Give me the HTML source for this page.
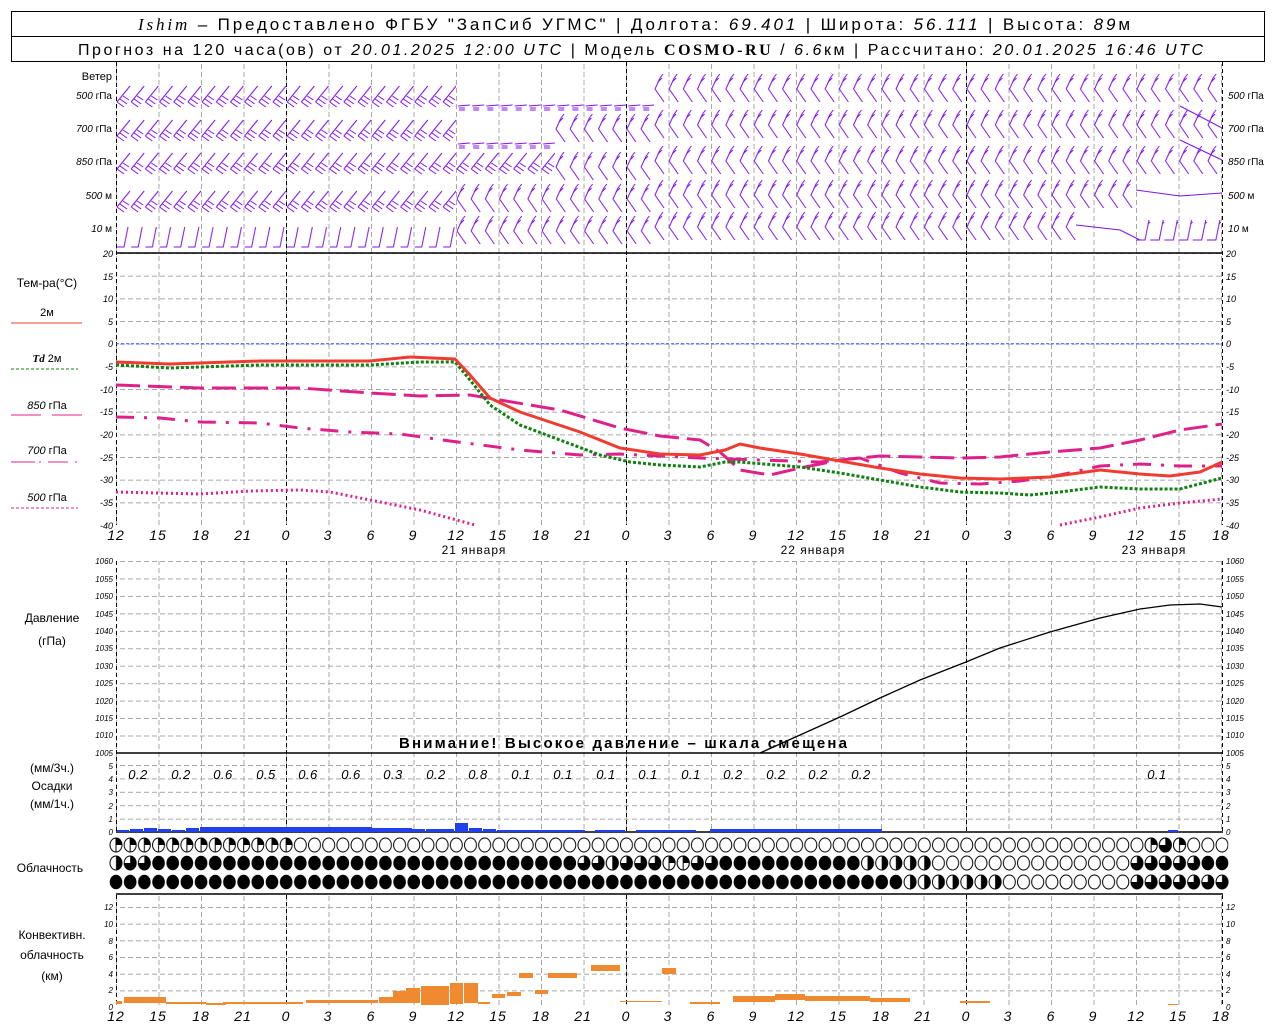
<!DOCTYPE html>
<html><head><meta charset="utf-8"><style>
html,body{margin:0;padding:0;background:#fff;}
svg{display:block;font-family:"Liberation Sans",sans-serif;}
.it{font-style:italic;}
</style></head><body>
<svg width="1280" height="1024" viewBox="0 0 1280 1024" xmlns="http://www.w3.org/2000/svg">
<defs>
<pattern id="vg" x="116" y="0" width="42.5" height="8" patternUnits="userSpaceOnUse"><rect x="0" y="0" width="1" height="5" fill="#a8a8a8"/></pattern>
<pattern id="hgT" x="0" y="253" width="8" height="22.667" patternUnits="userSpaceOnUse"><rect x="0" y="0" width="5" height="1" fill="#a8a8a8"/></pattern>
<pattern id="hgP" x="0" y="561" width="8" height="17.45" patternUnits="userSpaceOnUse"><rect x="0" y="0" width="5" height="1" fill="#a8a8a8"/></pattern>
<pattern id="hgR" x="0" y="765" width="8" height="13.4" patternUnits="userSpaceOnUse"><rect x="0" y="0" width="5" height="1" fill="#a8a8a8"/></pattern>
<pattern id="hgC" x="0" y="907" width="8" height="16.67" patternUnits="userSpaceOnUse"><rect x="0" y="0" width="5" height="1" fill="#a8a8a8"/></pattern>
<pattern id="cE" x="0" y="0" width="14.18" height="20" patternUnits="userSpaceOnUse"><ellipse cx="7" cy="10" rx="6" ry="7" fill="#fff" stroke="#000" stroke-width="1"/></pattern>
<pattern id="cF" x="0" y="0" width="14.18" height="20" patternUnits="userSpaceOnUse"><ellipse cx="7" cy="10" rx="6.3" ry="7.3" fill="#000"/></pattern>
<pattern id="cH" x="0" y="0" width="14.18" height="20" patternUnits="userSpaceOnUse"><ellipse cx="7" cy="10" rx="6" ry="7" fill="#fff" stroke="#000"/><path d="M7 3 A6 7 0 0 1 7 17 Z" fill="#000"/></pattern>
<pattern id="cQ" x="0" y="0" width="14.18" height="20" patternUnits="userSpaceOnUse"><ellipse cx="7" cy="10" rx="6" ry="7" fill="#fff" stroke="#000"/><path d="M7 3 A6 7 0 0 1 13 10 L7 10 Z" fill="#000"/><line x1="7" y1="3" x2="7" y2="17" stroke="#000"/></pattern>
<pattern id="c3" x="0" y="0" width="14.18" height="20" patternUnits="userSpaceOnUse"><ellipse cx="7" cy="10" rx="6" ry="7" fill="#fff" stroke="#000"/><path d="M7 3 A6 7 0 1 1 1 10 L7 10 Z" fill="#000"/></pattern>
<pattern id="wA" x="0" y="0" width="14.18" height="40" patternUnits="userSpaceOnUse"><g stroke="#8010f0" fill="none" stroke-width="1"><path d="M1 24 L14 8"/><path d="M1 24 L8 29 M4 21 L11 26 M7 18 L13 22"/></g></pattern>
<pattern id="wB" x="0" y="0" width="14.18" height="40" patternUnits="userSpaceOnUse"><g stroke="#8010f0" fill="none" stroke-width="1"><path d="M6 6 L1 17 L10 30"/><path d="M6 6 L9 2 M4 10 L8 6"/></g></pattern>
<pattern id="wC" x="0" y="0" width="14.18" height="40" patternUnits="userSpaceOnUse"><g stroke="#8010f0" fill="none" stroke-width="1"><path d="M12 10 L8 30 L1 30"/></g></pattern>
<pattern id="wD" x="0" y="0" width="14.18" height="40" patternUnits="userSpaceOnUse"><g stroke="#8010f0" fill="none" stroke-width="1"><path d="M13 10 L9 30 L0 30"/><path d="M12 14 L14 12"/></g></pattern>
<pattern id="wE" x="0" y="0" width="14.18" height="40" patternUnits="userSpaceOnUse"><g stroke="#8010f0" fill="none" stroke-width="1"><path d="M2 24 L14 23"/><path d="M3 26 L9 26 M3 28 L9 28"/></g></pattern>
</defs>

<!-- header -->
<rect x="11.5" y="11.5" width="1253" height="50" fill="#fff" stroke="#000"/>
<line x1="11" y1="36.5" x2="1265" y2="36.5" stroke="#000"/>
<text x="138" y="30" font-size="17" textLength="992" lengthAdjust="spacing"><tspan font-family="Liberation Serif" font-style="italic">Ishim</tspan> – Предоставлено ФГБУ "ЗапСиб УГМС" | Долгота: <tspan class="it">69.401</tspan> | Широта: <tspan class="it">56.111</tspan> | Высота: <tspan class="it">89</tspan>м</text>
<text x="78" y="55" font-size="16" textLength="1125" lengthAdjust="spacing">Прогноз на 120 часа(ов) от <tspan class="it">20.01.2025 12:00 UTC</tspan>  | Модель <tspan font-family="Liberation Serif" font-weight="bold">COSMO-RU</tspan> / <tspan class="it">6.6</tspan>км | Рассчитано: <tspan class="it">20.01.2025 16:46 UTC</tspan></text>

<!-- grids -->
<rect x="116" y="62" width="1107" height="191" fill="url(#vg)"/>
<rect x="116" y="253" width="1107" height="272" fill="url(#vg)"/>
<rect x="116" y="561" width="1107" height="271" fill="url(#vg)"/>
<rect x="116" y="895" width="1107" height="112" fill="url(#vg)"/>
<rect x="116" y="253" width="1107" height="272" fill="url(#hgT)"/>
<rect x="116" y="561" width="1107" height="192" fill="url(#hgP)"/>
<rect x="116" y="765" width="1107" height="67" fill="url(#hgR)"/>
<rect x="116" y="907" width="1107" height="100" fill="url(#hgC)"/>
<g stroke="#000" stroke-dasharray="4 3" stroke-width="1">
<path d="M116.5 62V525M286.5 62V525M626.5 62V525M966.5 62V525M1222.5 62V525"/>
<path d="M116.5 561V832M286.5 561V832M626.5 561V832M966.5 561V832M1222.5 561V832"/>
<path d="M116.5 895V1007M286.5 895V1007M626.5 895V1007M966.5 895V1007M1222.5 895V1007"/>
</g>
<g stroke="#000" stroke-width="1.5">
<line x1="116" y1="253" x2="1223" y2="253"/>
<line x1="116" y1="753" x2="1223" y2="753"/>
<line x1="116" y1="832" x2="1223" y2="832"/>
<line x1="116" y1="894" x2="1223" y2="894"/>
</g>
<line x1="116" y1="343.7" x2="1222" y2="343.7" stroke="#3050ff" stroke-dasharray="3 2"/>

<!-- wind barbs -->
<g transform="translate(116,78)"><rect width="340" height="40" fill="url(#wA)"/></g>
<g transform="translate(116,112)"><rect width="340" height="40" fill="url(#wA)"/></g>
<g transform="translate(116,145)"><rect width="340" height="40" fill="url(#wA)"/></g>
<g transform="translate(116,183)"><rect width="340" height="40" fill="url(#wA)"/></g>
<g transform="translate(116,217)"><rect width="340" height="36" fill="url(#wC)"/></g>
<g transform="translate(456,82)"><rect width="198" height="40" fill="url(#wE)"/></g>
<g transform="translate(456,120)"><rect width="99" height="40" fill="url(#wE)"/></g>
<g transform="translate(555,112)"><rect width="100" height="36" fill="url(#wB)"/></g>
<g transform="translate(456,145)"><rect width="99" height="40" fill="url(#wA)"/></g>
<g transform="translate(555,150)"><rect width="100" height="36" fill="url(#wB)"/></g>
<g transform="translate(456,182)"><rect width="198" height="36" fill="url(#wB)"/></g>
<g transform="translate(456,214)"><rect width="198" height="36" fill="url(#wB)"/></g>
<g transform="translate(654,72)"><rect width="567" height="36" fill="url(#wB)"/></g>
<g transform="translate(654,108)"><rect width="567" height="36" fill="url(#wB)"/></g>
<g transform="translate(654,144)"><rect width="567" height="36" fill="url(#wB)"/></g>
<g transform="translate(654,178)"><rect width="482" height="36" fill="url(#wB)"/></g>
<g transform="translate(654,210)"><rect width="425" height="36" fill="url(#wB)"/></g>
<g transform="translate(1136,210)"><rect width="86" height="40" fill="url(#wD)"/></g>
<g stroke="#8010f0" fill="none">
<path d="M1136 190 L1180 196 L1222 193"/>
<path d="M1076 225 L1120 230 L1140 240"/>
<path d="M1180 106 L1222 128 M1180 140 L1222 160"/>
</g>
<g font-size="10" font-style="italic">
<text x="112" y="80" text-anchor="end" font-style="normal" font-size="11">Ветер</text>
<text x="112" y="99" text-anchor="end">500 <tspan font-style="normal">гПа</tspan></text>
<text x="112" y="132" text-anchor="end">700 <tspan font-style="normal">гПа</tspan></text>
<text x="112" y="165" text-anchor="end">850 <tspan font-style="normal">гПа</tspan></text>
<text x="112" y="199" text-anchor="end">500 <tspan font-style="normal">м</tspan></text>
<text x="112" y="232" text-anchor="end">10 <tspan font-style="normal">  м</tspan></text>
<text x="1228" y="99">500 <tspan font-style="normal">гПа</tspan></text>
<text x="1228" y="132">700 <tspan font-style="normal">гПа</tspan></text>
<text x="1228" y="165">850 <tspan font-style="normal">гПа</tspan></text>
<text x="1228" y="199">500 <tspan font-style="normal">м</tspan></text>
<text x="1228" y="232">10 <tspan font-style="normal">  м</tspan></text>
</g>

<!-- temperature -->
<g font-size="9" font-style="italic">
<g text-anchor="end">
<text x="113" y="257">20</text><text x="113" y="280">15</text><text x="113" y="302">10</text><text x="113" y="325">5</text><text x="113" y="347">0</text><text x="113" y="370">-5</text><text x="113" y="393">-10</text><text x="113" y="415">-15</text><text x="113" y="438">-20</text><text x="113" y="461">-25</text><text x="113" y="483">-30</text><text x="113" y="506">-35</text><text x="113" y="529">-40</text>
</g>
<text x="1226" y="257">20</text><text x="1226" y="280">15</text><text x="1226" y="302">10</text><text x="1226" y="325">5</text><text x="1226" y="347">0</text><text x="1226" y="370">-5</text><text x="1226" y="393">-10</text><text x="1226" y="415">-15</text><text x="1226" y="438">-20</text><text x="1226" y="461">-25</text><text x="1226" y="483">-30</text><text x="1226" y="506">-35</text><text x="1226" y="529">-40</text>
</g>
<g font-size="11">
<text x="47" y="287" text-anchor="middle" font-size="12">Тем-ра(°C)</text>
<text x="47" y="316" text-anchor="middle">2м</text>
<line x1="11" y1="323" x2="82" y2="323" stroke="#f03c30"/>
<text x="47" y="362" text-anchor="middle"><tspan font-family="Liberation Serif" font-style="italic" font-weight="bold">Td</tspan>  2м</text>
<line x1="11" y1="369" x2="78" y2="369" stroke="#108010" stroke-dasharray="3 2"/>
<text x="47" y="409" text-anchor="middle"><tspan font-style="italic">850</tspan> гПа</text>
<line x1="11" y1="415" x2="41" y2="415" stroke="#e0208a"/><line x1="52" y1="415" x2="82" y2="415" stroke="#e0208a"/>
<text x="47" y="454" text-anchor="middle"><tspan font-style="italic">700</tspan> гПа</text>
<path d="M11 462H35M39 462H41M48 462H68M75 462H77" stroke="#e0208a"/>
<text x="47" y="501" text-anchor="middle"><tspan font-style="italic">500</tspan> гПа</text>
<line x1="11" y1="508" x2="78" y2="508" stroke="#e0208a" stroke-dasharray="3 2"/>
</g>
<g fill="none" stroke-width="3">
<polyline stroke="#e0208a" stroke-dasharray="2 3" points="116,492 200,494 250,491 300,490 330,492 370,500 420,510 475,525"/>
<polyline stroke="#e0208a" stroke-dasharray="2 3" points="1060,525 1100,517 1140,508 1180,503 1222,499"/>
<polyline stroke="#e0208a" stroke-dasharray="18 10 3 10" points="116,417 160,418 200,422 260,423 300,428 350,432 400,434 450,441 520,450 580,455 620,454 700,458 760,460 820,462 860,458 900,473 940,483 980,484 1020,481 1060,475 1100,466 1140,464 1180,466 1222,466"/>
<polyline stroke="#e0208a" stroke-dasharray="24 8" points="116,385 200,388 300,388 370,393 420,396 470,395 500,400 560,410 620,428 660,436 700,440 720,452 740,470 770,475 800,468 840,460 880,456 920,457 960,458 1000,457 1050,452 1100,448 1140,440 1180,430 1222,424"/>
<polyline stroke="#108010" stroke-dasharray="3 2" points="116,365 170,368 260,365 370,365 420,362 455,362 470,380 490,405 520,425 560,440 600,455 630,462 660,465 700,467 725,462 740,462 800,467 840,473 880,480 920,487 960,492 1000,493 1030,495 1060,492 1100,487 1140,489 1180,489 1222,478"/>
<polyline stroke="#f03c30" points="116,362 170,364 260,361 370,361 410,357 455,359 470,375 490,398 520,412 580,432 620,448 660,454 700,455 725,450 740,444 760,448 800,454 840,461 880,468 920,474 960,478 1000,479 1050,477 1100,470 1140,474 1170,476 1200,472 1222,462"/>
</g>

<!-- x axis labels -->
<g font-size="14" font-style="italic" text-anchor="middle" letter-spacing="1">
<text x="116" y="540">12</text><text x="158" y="540">15</text><text x="201" y="540">18</text><text x="243" y="540">21</text><text x="286" y="540">0</text><text x="328" y="540">3</text><text x="371" y="540">6</text><text x="413" y="540">9</text><text x="456" y="540">12</text><text x="498" y="540">15</text><text x="541" y="540">18</text><text x="583" y="540">21</text><text x="626" y="540">0</text><text x="668" y="540">3</text><text x="711" y="540">6</text><text x="753" y="540">9</text><text x="796" y="540">12</text><text x="838" y="540">15</text><text x="881" y="540">18</text><text x="923" y="540">21</text><text x="966" y="540">0</text><text x="1008" y="540">3</text><text x="1051" y="540">6</text><text x="1093" y="540">9</text><text x="1136" y="540">12</text><text x="1178" y="540">15</text><text x="1221" y="540">18</text>
</g>
<g font-size="12" text-anchor="middle" letter-spacing="1">
<text x="474" y="554">21 января</text><text x="813" y="554">22 января</text><text x="1154" y="554">23 января</text>
</g>

<!-- pressure -->
<g font-size="8" font-style="italic">
<g text-anchor="end">
<text x="113" y="564">1060</text><text x="113" y="582">1055</text><text x="113" y="599">1050</text><text x="113" y="617">1045</text><text x="113" y="634">1040</text><text x="113" y="651">1035</text><text x="113" y="669">1030</text><text x="113" y="686">1025</text><text x="113" y="704">1020</text><text x="113" y="721">1015</text><text x="113" y="738">1010</text><text x="113" y="756">1005</text>
</g>
<text x="1226" y="564">1060</text><text x="1226" y="582">1055</text><text x="1226" y="599">1050</text><text x="1226" y="617">1045</text><text x="1226" y="634">1040</text><text x="1226" y="651">1035</text><text x="1226" y="669">1030</text><text x="1226" y="686">1025</text><text x="1226" y="704">1020</text><text x="1226" y="721">1015</text><text x="1226" y="738">1010</text><text x="1226" y="756">1005</text>
</g>
<text x="52" y="622" font-size="12" text-anchor="middle">Давление</text>
<text x="52" y="645" font-size="12" text-anchor="middle">(гПа)</text>
<polyline fill="none" stroke="#000" stroke-width="1.3" points="760,753 800,735 840,717 880,698 920,680 966,662 1000,648 1050,632 1100,618 1140,609 1170,605 1200,604 1222,607"/>
<text x="399" y="748" font-size="15" font-weight="bold" textLength="448" lengthAdjust="spacing">Внимание! Высокое давление – шкала смещена</text>

<!-- precipitation -->
<g font-size="8" font-style="italic">
<g text-anchor="end"><text x="113" y="769">5</text><text x="113" y="782">4</text><text x="113" y="795">3</text><text x="113" y="809">2</text><text x="113" y="822">1</text><text x="113" y="835">0</text></g>
<text x="1226" y="769">5</text><text x="1226" y="782">4</text><text x="1226" y="795">3</text><text x="1226" y="809">2</text><text x="1226" y="822">1</text><text x="1226" y="835">0</text>
</g>
<g font-size="12" text-anchor="middle">
<text x="52" y="772">(мм/3ч.)</text><text x="52" y="790">Осадки</text><text x="52" y="808">(мм/1ч.)</text>
</g>
<g font-size="13" font-style="italic" text-anchor="middle" letter-spacing="0.5">
<text x="138" y="779">0.2</text><text x="181" y="779">0.2</text><text x="223" y="779">0.6</text><text x="266" y="779">0.5</text><text x="308" y="779">0.6</text><text x="351" y="779">0.6</text><text x="393" y="779">0.3</text><text x="436" y="779">0.2</text><text x="478" y="779">0.8</text><text x="521" y="779">0.1</text><text x="563" y="779">0.1</text><text x="606" y="779">0.1</text><text x="648" y="779">0.1</text><text x="691" y="779">0.1</text><text x="733" y="779">0.2</text><text x="776" y="779">0.2</text><text x="818" y="779">0.2</text><text x="861" y="779">0.2</text><text x="1157" y="779">0.1</text>
</g>
<g fill="#2040f0">
<rect x="117" y="830" width="12" height="2"/><rect x="130" y="829" width="13" height="3"/><rect x="144" y="828" width="13" height="4"/><rect x="158" y="829" width="13" height="3"/><rect x="172" y="830" width="13" height="2"/><rect x="186" y="828" width="13" height="4"/>
<rect x="200" y="827" width="84" height="5"/><rect x="244" y="828" width="28" height="4"/><rect x="272" y="827" width="100" height="5"/><rect x="372" y="828" width="40" height="4"/><rect x="412" y="829" width="13" height="3"/><rect x="426" y="829" width="28" height="3"/><rect x="455" y="823" width="13" height="9"/><rect x="469" y="828" width="13" height="4"/><rect x="483" y="829" width="13" height="3"/><rect x="497" y="830" width="88" height="2"/><rect x="595" y="830" width="30" height="2"/><rect x="636" y="830" width="60" height="2"/><rect x="710" y="829" width="172" height="3"/><rect x="1168" y="830" width="10" height="2"/>
</g>

<!-- clouds (column k center = 116 + 14.18k; tile origin = 109 + 14.18k) -->
<text x="50" y="872" font-size="12" text-anchor="middle">Облачность</text>
<g transform="translate(109,835)">
<rect x="0" width="184" height="20" fill="url(#cQ)"/>
<rect x="184.3" width="935" height="20" fill="url(#cE)"/>
<rect x="1035" width="14.2" height="20" fill="url(#cQ)"/>
<rect x="1049.3" width="14.2" height="20" fill="url(#c3)"/>
<rect x="1063.5" width="14.2" height="20" fill="url(#cQ)"/>
</g>
<g transform="translate(109,853)">
<rect x="0" width="14.2" height="20" fill="url(#cH)"/>
<rect x="14.18" width="28.3" height="20" fill="url(#c3)"/>
<rect x="42.54" width="425.4" height="20" fill="url(#cF)"/>
<rect x="467.9" width="141.8" height="20" fill="url(#c3)"/>
<rect x="496.3" width="14.18" height="20" fill="url(#cH)"/>
<rect x="553" width="28.36" height="20" fill="url(#cQ)"/>
<rect x="609.7" width="141.8" height="20" fill="url(#cF)"/>
<rect x="751.5" width="70.9" height="20" fill="url(#cH)"/>
<rect x="822.4" width="198.5" height="20" fill="url(#cE)"/>
<rect x="1021" width="70.9" height="20" fill="url(#c3)"/>
<rect x="1091.9" width="28" height="20" fill="url(#cF)"/>
</g>
<g transform="translate(109,872)">
<rect x="0" width="794" height="20" fill="url(#cF)"/>
<rect x="794" width="99.3" height="20" fill="url(#cH)"/>
<rect x="893.3" width="127.6" height="20" fill="url(#cE)"/>
<rect x="1021" width="99" height="20" fill="url(#c3)"/>
</g>

<!-- convective -->
<g font-size="8" font-style="italic">
<g text-anchor="end"><text x="113" y="910">12</text><text x="113" y="927">10</text><text x="113" y="944">8</text><text x="113" y="960">6</text><text x="113" y="977">4</text><text x="113" y="993">2</text><text x="113" y="1010">0</text></g>
<text x="1226" y="910">12</text><text x="1226" y="927">10</text><text x="1226" y="944">8</text><text x="1226" y="960">6</text><text x="1226" y="977">4</text><text x="1226" y="993">2</text><text x="1226" y="1010">0</text>
</g>
<g font-size="12" text-anchor="middle">
<text x="52" y="939">Конвективн.</text><text x="52" y="959">облачность</text><text x="52" y="980">(км)</text>
</g>
<g fill="#f08a30">
<rect x="116" y="1001" width="6" height="3"/><rect x="124" y="997" width="42" height="6"/><rect x="166" y="1002" width="40" height="2"/><rect x="206" y="1003" width="20" height="2"/><rect x="223" y="1002" width="80" height="2"/><rect x="306" y="1000" width="72" height="3"/><rect x="379" y="997" width="14" height="6"/><rect x="393" y="991" width="13" height="12"/><rect x="406" y="988" width="14" height="15"/><rect x="421" y="986" width="28" height="19"/><rect x="450" y="983" width="13" height="21"/><rect x="464" y="983" width="14" height="20"/><rect x="478" y="1002" width="12" height="2"/><rect x="492" y="994" width="13" height="4"/><rect x="507" y="992" width="14" height="4"/><rect x="519" y="973" width="14" height="5"/><rect x="535" y="990" width="13" height="4"/><rect x="548" y="973" width="29" height="5"/><rect x="591" y="965" width="29" height="6"/><rect x="620" y="1001" width="42" height="1"/><rect x="662" y="968" width="14" height="6"/><rect x="690" y="1002" width="30" height="2"/><rect x="733" y="996" width="42" height="6"/><rect x="775" y="994" width="30" height="6"/><rect x="805" y="996" width="65" height="5"/><rect x="870" y="998" width="40" height="4"/><rect x="960" y="1001" width="30" height="2"/><rect x="1168" y="1004" width="10" height="1"/>
</g>
<g font-size="14" font-style="italic" text-anchor="middle" letter-spacing="1">
<text x="116" y="1021">12</text><text x="158" y="1021">15</text><text x="201" y="1021">18</text><text x="243" y="1021">21</text><text x="286" y="1021">0</text><text x="328" y="1021">3</text><text x="371" y="1021">6</text><text x="413" y="1021">9</text><text x="456" y="1021">12</text><text x="498" y="1021">15</text><text x="541" y="1021">18</text><text x="583" y="1021">21</text><text x="626" y="1021">0</text><text x="668" y="1021">3</text><text x="711" y="1021">6</text><text x="753" y="1021">9</text><text x="796" y="1021">12</text><text x="838" y="1021">15</text><text x="881" y="1021">18</text><text x="923" y="1021">21</text><text x="966" y="1021">0</text><text x="1008" y="1021">3</text><text x="1051" y="1021">6</text><text x="1093" y="1021">9</text><text x="1136" y="1021">12</text><text x="1178" y="1021">15</text><text x="1221" y="1021">18</text>
</g>
</svg>
</body></html>
